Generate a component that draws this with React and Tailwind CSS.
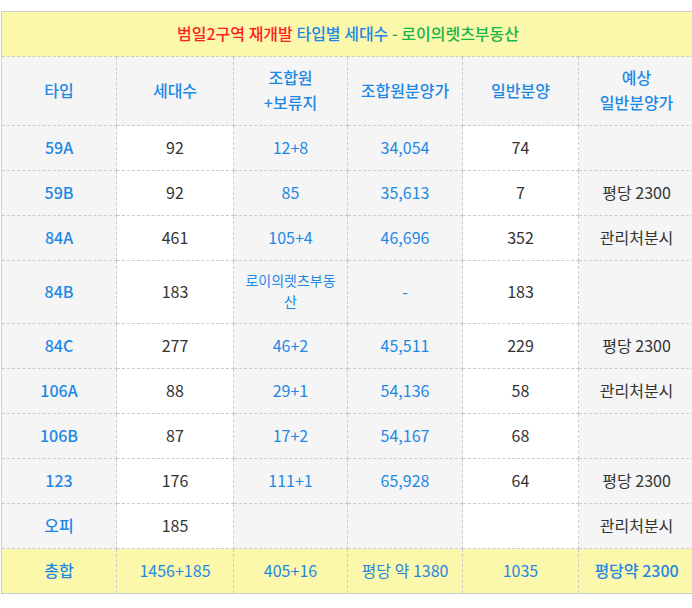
import React from "react";

const B = "text-[#1e88e5]";
const D = "text-[#333333]";

const rows = [
  { t: "59A", a: "92", b: "12+8", c: "34,054", d: "74", e: "" },
  { t: "59B", a: "92", b: "85", c: "35,613", d: "7", e: "평당 2300" },
  { t: "84A", a: "461", b: "105+4", c: "46,696", d: "352", e: "관리처분시" },
  { t: "84B", a: "183", b: "로이의렛츠부동\n산", c: "-", d: "183", e: "", tall: true },
  { t: "84C", a: "277", b: "46+2", c: "45,511", d: "229", e: "평당 2300" },
  { t: "106A", a: "88", b: "29+1", c: "54,136", d: "58", e: "관리처분시" },
  { t: "106B", a: "87", b: "17+2", c: "54,167", d: "68", e: "" },
  { t: "123", a: "176", b: "111+1", c: "65,928", d: "64", e: "평당 2300" },
  { t: "오피", a: "185", b: "", c: "", d: "", e: "관리처분시" },
];

const cell = "border border-dashed border-[#cccccc] text-center align-middle p-0";

export default function App() {
  return (
    <div
      className="w-[692px] h-[608px] overflow-hidden bg-white pt-[11px] pl-[1px]"
      style={{ fontFamily: '"Noto Sans CJK KR", "Noto Sans", sans-serif' }}
    >
      <table className="border-collapse border border-solid border-[#cccccc] table-fixed w-[693px] text-[16px] leading-[22px]">
        <colgroup>
          <col className="w-[115px]" />
          <col className="w-[117px]" />
          <col className="w-[114px]" />
          <col className="w-[115px]" />
          <col className="w-[116px]" />
          <col className="w-[116px]" />
        </colgroup>
        <tbody>
          <tr className="h-[45px]">
            <td colSpan={6} className={`${cell} bg-[#fcf8ab] font-medium pb-[2px]`}>
              <span className="text-[#ff1f1f]">범일2구역 재개발</span>{" "}
              <span className="text-[#1e88e5]">타입별 세대수</span>{" "}
              <span className="text-[#17b54c]">- 로이의렛츠부동산</span>
            </td>
          </tr>
          <tr className="h-[69px] bg-[#f5f5f5]">
            <td className={`${cell} ${B} font-medium pb-[2px]`}>타입</td>
            <td className={`${cell} ${B} font-medium pb-[2px]`}>세대수</td>
            <td className={`${cell} ${B} font-medium leading-[25px] pb-[2px]`}>
              조합원
              <br />
              +보류지
            </td>
            <td className={`${cell} ${B} font-medium pb-[2px]`}>조합원분양가</td>
            <td className={`${cell} ${B} font-medium pb-[2px]`}>일반분양</td>
            <td className={`${cell} ${B} font-medium leading-[25px] pb-[2px]`}>
              예상
              <br />
              일반분양가
            </td>
          </tr>
          {rows.map((r) => (
            <tr key={r.t} className={r.tall ? "h-[63px]" : "h-[45px]"}>
              <td className={`${cell} bg-[#f5f5f5] ${B} font-medium pb-[2px]`}>{r.t}</td>
              <td className={`${cell} bg-white ${D} pb-[2px]`}>{r.a}</td>
              <td className={`${cell} bg-[#f5f5f5] ${B} pb-[2px]`}>
                {r.tall ? (
                  <span className="block text-[14px] leading-[21px]">
                    로이의렛츠부동
                    <br />산
                  </span>
                ) : (
                  r.b
                )}
              </td>
              <td className={`${cell} bg-[#f5f5f5] ${B} pb-[2px]`}>{r.c}</td>
              <td className={`${cell} bg-white ${D} pb-[2px]`}>{r.d}</td>
              <td className={`${cell} bg-[#f5f5f5] ${D} pb-[2px]`}>{r.e}</td>
            </tr>
          ))}
          <tr className="h-[45px] bg-[#fcf8ab]">
            <td className={`${cell} ${B} font-medium pb-[2px]`}>총합</td>
            <td className={`${cell} ${B} pb-[2px]`}>1456+185</td>
            <td className={`${cell} ${B} pb-[2px]`}>405+16</td>
            <td className={`${cell} ${B} pb-[2px]`}>평당 약 1380</td>
            <td className={`${cell} ${B} pb-[2px]`}>1035</td>
            <td className={`${cell} ${B} font-medium pb-[2px]`}>평당약 2300</td>
          </tr>
        </tbody>
      </table>
    </div>
  );
}
